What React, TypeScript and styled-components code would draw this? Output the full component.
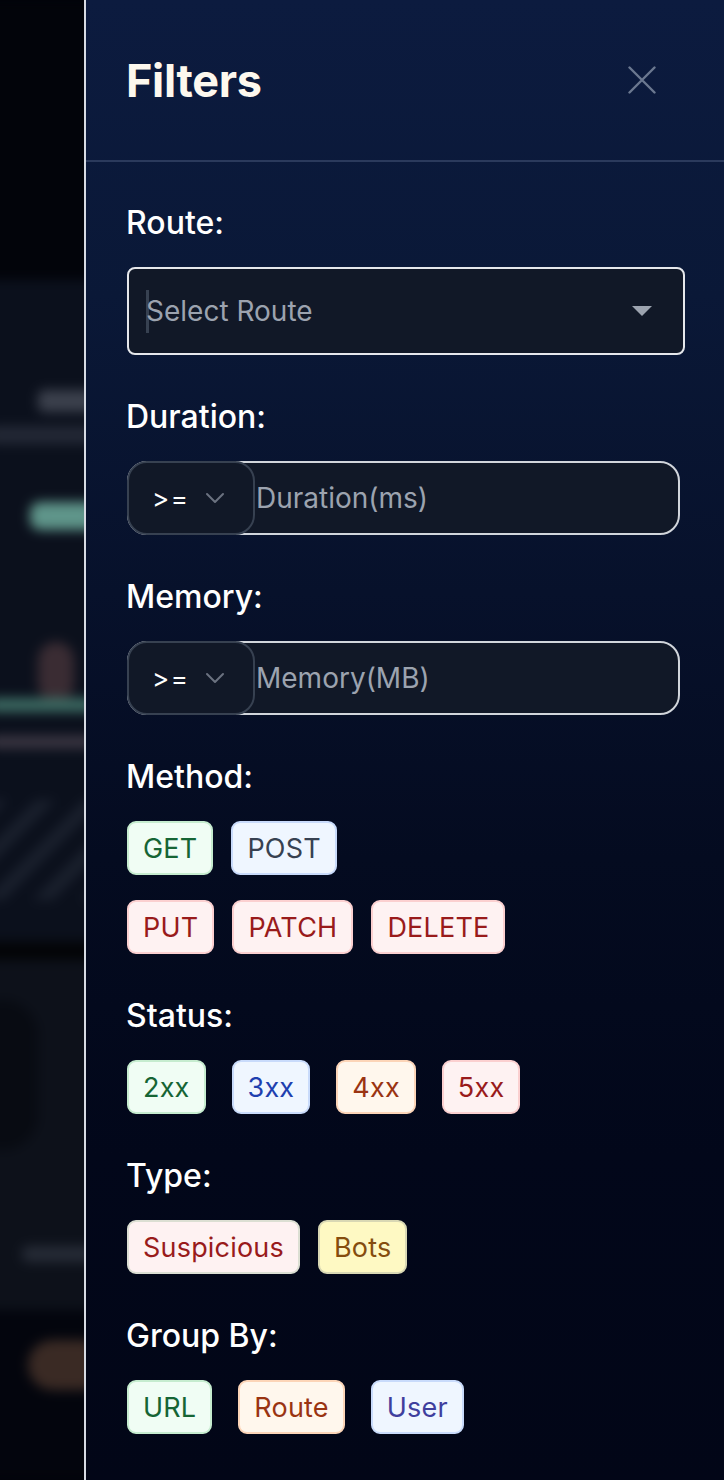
import { Fragment } from 'react';
import styled, { createGlobalStyle, css } from 'styled-components';

const GlobalStyle = createGlobalStyle`
  html, body {
    margin: 0;
    padding: 0;
    background: #02040a;
  }
  body {
    font-family: Inter, "Noto Sans", "Liberation Sans", sans-serif;
    -webkit-font-smoothing: antialiased;
  }
  * { box-sizing: border-box; }
`;

// --- Page shell ---
const Page = styled.div`
  display: flex;
  width: 724px;
  height: 1480px;
  overflow: hidden;
`;

// --- Blurred page behind the drawer ---
const Backdrop = styled.div`
  width: 84px;
  flex-shrink: 0;
  overflow: hidden;
  background: #02040a;
`;

const BackdropInner = styled.div`
  display: flex;
  flex-direction: column;
  filter: blur(6px);
  margin: 0 -12px 0 -12px;
`;

const Band = styled.div<{ $h: number; $bg: string }>`
  height: ${({ $h }) => $h}px;
  background: ${({ $bg }) => $bg};
  display: flex;
  flex-direction: column;
`;

const Blob = styled.div<{ $w: number; $h: number; $bg: string; $ml: number; $mt: number; $r?: number }>`
  width: ${({ $w }) => $w}px;
  height: ${({ $h }) => $h}px;
  background: ${({ $bg }) => $bg};
  margin-left: ${({ $ml }) => $ml}px;
  margin-top: ${({ $mt }) => $mt}px;
  border-radius: ${({ $r }) => $r ?? 6}px;
  flex-shrink: 0;
`;

const Stripes = styled.div`
  height: 100px;
  margin-top: 52px;
  background: repeating-linear-gradient(
    135deg,
    #1a202d 0 14px,
    #0b101c 14px 34px
  );
`;

// --- Drawer ---
const Drawer = styled.aside`
  flex: 1;
  border-left: 2px solid #d7dbe3;
  background: linear-gradient(
    180deg,
    #0c1b3f 0%,
    #0a1837 20%,
    #07112b 40%,
    #040b20 58%,
    #02071a 78%,
    #020617 100%
  );
  display: flex;
  flex-direction: column;
`;

const Header = styled.header`
  height: 162px;
  flex-shrink: 0;
  display: flex;
  align-items: center;
  justify-content: space-between;
  padding: 0 58px 0 40px;
  border-bottom: 2px solid #2b3a5c;
`;

const Title = styled.h1`
  margin: 0;
  font-size: 45px;
  font-weight: 700;
  color: #fdf8ee;
  letter-spacing: -0.3px;
`;

const CloseButton = styled.button`
  width: 48px;
  height: 48px;
  border: none;
  background: transparent;
  padding: 0;
  display: flex;
  align-items: center;
  justify-content: center;
  color: #6b7890;
  cursor: pointer;
`;

const Body = styled.div`
  display: flex;
  flex-direction: column;
  gap: 43px;
  padding: 42px 39px 0 41px;
`;

const Section = styled.section`
  display: flex;
  flex-direction: column;
  gap: 25px;
`;

const Label = styled.div`
  font-size: 32px;
  line-height: 38px;
  font-weight: 500;
  color: #ffffff;
  margin-left: -1px;
`;

// --- Route select ---
const SelectBox = styled.div`
  height: 88px;
  border: 2px solid #e5e7eb;
  border-radius: 8px;
  background: #111827;
  display: flex;
  align-items: center;
  padding: 0 31px 0 17px;
`;

const Caret = styled.span`
  width: 3px;
  height: 43px;
  margin-right: -3px;
  background: #374151;
  flex-shrink: 0;
`;

const Placeholder = styled.span`
  flex: 1;
  font-size: 28px;
  color: #9ca3af;
`;

// --- Operator + value input ---
const InputGroup = styled.div`
  height: 74px;
  margin-right: 5px;
  border: 2px solid #d1d5db;
  border-radius: 20px;
  background: #111827;
  display: flex;
  align-items: center;
`;

const OperatorSelect = styled.div`
  width: 128px;
  align-self: stretch;
  margin: -2px 0 -2px -2px;
  border: 2px solid #374151;
  border-radius: 20px;
  background: #111827;
  display: flex;
  align-items: center;
  padding-left: 23px;
  gap: 16px;
`;

const OperatorText = styled.span`
  font-size: 26px;
  color: #ffffff;
  letter-spacing: 1.5px;
`;

const ValueInput = styled.span`
  flex: 1;
  padding-left: 1px;
  font-size: 28px;
  color: #9ca3af;
`;

// --- Chips ---
type Tone = 'green' | 'blue' | 'slate' | 'orange' | 'red' | 'redGray' | 'yellow' | 'indigo';

const tones: Record<Tone, { bg: string; border: string; fg: string }> = {
  green: { bg: '#f0fdf4', border: '#c6eccf', fg: '#166534' },
  slate: { bg: '#eff6ff', border: '#c9dbfb', fg: '#374151' },
  blue: { bg: '#eff6ff', border: '#c9dbfb', fg: '#1e40af' },
  orange: { bg: '#fff7ed', border: '#fcd5b8', fg: '#9a3412' },
  red: { bg: '#fef2f2', border: '#fbd0d0', fg: '#991b1b' },
  redGray: { bg: '#fef2f2', border: '#dcdfd3', fg: '#991b1b' },
  yellow: { bg: '#fef9c3', border: '#d9d8b4', fg: '#854d0e' },
  indigo: { bg: '#eff6ff', border: '#c9dbfb', fg: '#3f3f9e' },
};

const ChipStack = styled.div`
  display: flex;
  flex-direction: column;
  gap: 25px;
`;

const ChipRow = styled.div<{ $gap: number }>`
  display: flex;
  column-gap: ${({ $gap }) => $gap}px;
`;

const Chip = styled.button<{ $tone: Tone }>`
  height: 54px;
  padding: 0 14px;
  border-radius: 9px;
  font-family: inherit;
  font-size: 27px;
  font-weight: 400;
  letter-spacing: 0.2px;
  cursor: pointer;
  ${({ $tone }) => css`
    background: ${tones[$tone].bg};
    border: 2px solid ${tones[$tone].border};
    color: ${tones[$tone].fg};
  `}
`;

// --- Icons ---
function CloseIcon() {
  return (
    <svg width="28" height="28" viewBox="0 0 28 28" fill="none">
      <path d="M1.5 1.5 26.5 26.5M26.5 1.5 1.5 26.5" stroke="currentColor" strokeWidth="2.4" strokeLinecap="round" />
    </svg>
  );
}

function TriangleDown() {
  return (
    <svg width="20" height="10" viewBox="0 0 20 10">
      <path d="M0 0h20L10 10z" fill="#9ca3af" />
    </svg>
  );
}

function ChevronDown() {
  return (
    <svg width="20" height="12" viewBox="0 0 20 12" fill="none">
      <path d="M2 2l8 8 8-8" stroke="#6b7280" strokeWidth="2" strokeLinecap="round" strokeLinejoin="round" />
    </svg>
  );
}

interface ChipItem {
  label: string;
  tone: Tone;
}

function ChipGroup({ rows, gap }: { rows: ChipItem[][]; gap: number }) {
  return (
    <ChipStack>
      {rows.map((row, i) => (
        <ChipRow key={i} $gap={gap}>
          {row.map((item) => (
            <Chip key={item.label} $tone={item.tone}>{item.label}</Chip>
          ))}
        </ChipRow>
      ))}
    </ChipStack>
  );
}

function RangeInput({ placeholder }: { placeholder: string }) {
  return (
    <InputGroup>
      <OperatorSelect>
        <OperatorText>&gt;=</OperatorText>
        <ChevronDown />
      </OperatorSelect>
      <ValueInput>{placeholder}</ValueInput>
    </InputGroup>
  );
}

const methods: ChipItem[][] = [
  [
    { label: 'GET', tone: 'green' },
    { label: 'POST', tone: 'slate' },
  ],
  [
    { label: 'PUT', tone: 'red' },
    { label: 'PATCH', tone: 'red' },
    { label: 'DELETE', tone: 'red' },
  ],
];

const statuses: ChipItem[][] = [[
  { label: '2xx', tone: 'green' },
  { label: '3xx', tone: 'blue' },
  { label: '4xx', tone: 'orange' },
  { label: '5xx', tone: 'red' },
]];

const types: ChipItem[][] = [[
  { label: 'Suspicious', tone: 'redGray' },
  { label: 'Bots', tone: 'yellow' },
]];

const groupings: ChipItem[][] = [[
  { label: 'URL', tone: 'green' },
  { label: 'Route', tone: 'orange' },
  { label: 'User', tone: 'indigo' },
]];

const sections = [
  { title: 'Method:', rows: methods, gap: 18 },
  { title: 'Status:', rows: statuses, gap: 26 },
  { title: 'Type:', rows: types, gap: 18 },
  { title: 'Group By:', rows: groupings, gap: 26 },
];

export default function App() {
  return (
    <>
      <GlobalStyle />
      <Page>
        <Backdrop>
          <BackdropInner>
            <Band $h={280} $bg="#02040a" />
            <Band $h={662} $bg="#0b101c">
              <Blob $w={60} $h={22} $bg="#3b404c" $ml={50} $mt={110} />
              <Blob $w={108} $h={18} $bg="#232835" $ml={0} $mt={14} />
              <Blob $w={70} $h={28} $bg="#5f958a" $ml={42} $mt={58} $r={10} />
              <Blob $w={36} $h={60} $bg="#3a2c33" $ml={50} $mt={112} $r={18} />
              <Blob $w={108} $h={14} $bg="#3c6a62" $ml={0} $mt={-4} $r={6} />
              <Blob $w={108} $h={12} $bg="#3d3844" $ml={0} $mt={24} $r={6} />
              <Stripes />
            </Band>
            <Band $h={18} $bg="#030406" />
            <Band $h={350} $bg="#0d111a">
              <Blob $w={70} $h={150} $bg="#080b12" $ml={-20} $mt={40} $r={75} />
              <Blob $w={80} $h={16} $bg="#262b36" $ml={34} $mt={96} />
            </Band>
            <Band $h={170} $bg="#03050d">
              <Blob $w={80} $h={50} $bg="#3a2a24" $ml={40} $mt={30} $r={25} />
            </Band>
          </BackdropInner>
        </Backdrop>

        <Drawer>
          <Header>
            <Title>Filters</Title>
            <CloseButton aria-label="Close">
              <CloseIcon />
            </CloseButton>
          </Header>

          <Body>
            <Section>
              <Label>Route:</Label>
              <SelectBox>
                <Caret />
                <Placeholder>Select Route</Placeholder>
                <TriangleDown />
              </SelectBox>
            </Section>

            <Section>
              <Label>Duration:</Label>
              <RangeInput placeholder="Duration(ms)" />
            </Section>

            <Section>
              <Label>Memory:</Label>
              <RangeInput placeholder="Memory(MB)" />
            </Section>

            {sections.map((s) => (
              <Fragment key={s.title}>
                <Section>
                  <Label>{s.title}</Label>
                  <ChipGroup rows={s.rows} gap={s.gap} />
                </Section>
              </Fragment>
            ))}
          </Body>
        </Drawer>
      </Page>
    </>
  );
}
